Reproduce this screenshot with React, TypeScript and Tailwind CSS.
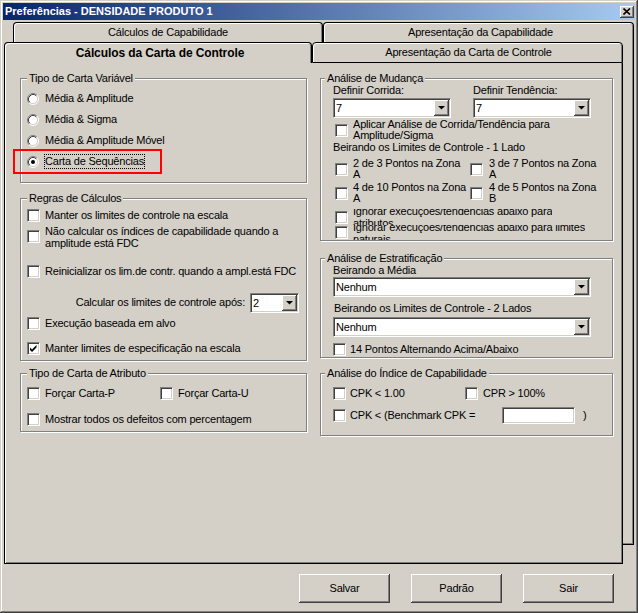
import React from 'react';

// classic win32 bevels
const sunken =
  'border border-t-[#808080] border-l-[#808080] border-b-white border-r-white shadow-[inset_1px_1px_0_#404040,inset_-1px_-1px_0_#d4d0c8]';
const raised =
  'shadow-[inset_-1px_-1px_0_#404040,inset_1px_1px_0_#ffffff,inset_-2px_-2px_0_#808080,inset_2px_2px_0_#d4d0c8]';

const Check = ({ checked }: { checked?: boolean }) => (
  <span className={`relative block h-[13px] w-[13px] shrink-0 bg-white ${sunken}`}>
    {checked && (
      <svg className="absolute left-0 top-0" width="11" height="11" viewBox="0 0 11 11">
        <path d="M2 4.5 L4 6.5 L8.5 2 V4.5 L4 9 L2 7 Z" fill="#000" />
      </svg>
    )}
  </span>
);

const Radio = ({ checked }: { checked?: boolean }) => (
  <svg className="shrink-0" width="12" height="12" viewBox="0 0 12 12">
    <circle cx="6" cy="6" r="4.5" fill="#fff" />
    <path d="M2.11 9.89 A5.5 5.5 0 0 1 9.89 2.11" fill="none" stroke="#808080" />
    <path d="M9.89 2.11 A5.5 5.5 0 0 1 2.11 9.89" fill="none" stroke="#fff" />
    <path d="M2.82 9.18 A4.5 4.5 0 0 1 9.18 2.82" fill="none" stroke="#404040" />
    <path d="M9.18 2.82 A4.5 4.5 0 0 1 2.82 9.18" fill="none" stroke="#d4d0c8" />
    {checked && <circle cx="6" cy="6" r="2" fill="#000" />}
  </svg>
);

const Combo = ({ value, className }: { value: string; className: string }) => (
  <div className={`flex h-[20px] shrink-0 bg-white p-[1px] ${sunken} ${className}`}>
    <span className="flex-1 pl-[1px] leading-[16px]">{value}</span>
    <span className={`flex h-full w-[15px] items-center justify-center bg-[#d4d0c8] ${raised}`}>
      <svg width="7" height="4" viewBox="0 0 7 4">
        <path d="M0 0 H7 L3.5 3.5 Z" fill="#000" />
      </svg>
    </span>
  </div>
);

const Group = ({
  title,
  legendClass,
  className,
  innerClass,
  children,
}: {
  title: string;
  legendClass: string;
  className?: string;
  innerClass: string;
  children: React.ReactNode;
}) => (
  <fieldset className={`border border-[#808080] shadow-[inset_1px_1px_0_#ffffff,1px_1px_0_#ffffff] ${className ?? ''}`}>
    <legend className={`bg-[#d4d0c8] px-[2px] leading-[13px] ${legendClass}`}>{title}</legend>
    <div className={innerClass}>{children}</div>
  </fieldset>
);

const Button = ({ label }: { label: string }) => (
  <div className={`flex h-[29px] w-[91px] items-center justify-center bg-[#d4d0c8] ${raised}`}>{label}</div>
);

export default function App() {
  return (
    <div className="h-[613px] w-[638px] bg-[#d4d0c8] px-[3px] pt-[3px] font-['Liberation_Sans',Arial,sans-serif] text-[11px] leading-[13px] tracking-[-0.2px] text-black shadow-[inset_-1px_-1px_0_#404040,inset_1px_1px_0_#d4d0c8,inset_-2px_-2px_0_#808080,inset_2px_2px_0_#ffffff]">
      {/* title bar */}
      <div className="flex h-[17px] items-center justify-between bg-[linear-gradient(to_right,#0a246a,#a6caf0)] pl-[2px] pr-[1px]">
        <span className="font-bold tracking-normal text-white">Preferências - DENSIDADE PRODUTO 1</span>
        <div className={`flex h-[12px] w-[14px] items-center justify-center bg-[#d4d0c8] ${raised}`}>
          <svg width="8" height="7" viewBox="0 0 8 7">
            <path d="M0.5 0.5 L7 6.5 M7 0.5 L0.5 6.5" stroke="#000" strokeWidth="1.6" />
          </svg>
        </div>
      </div>

      {/* tab control */}
      <div className="relative ml-[1px] mt-[2px]">
        <div className="absolute left-[9px] top-[20px] h-[503px] w-[621px] border-b border-r border-black bg-[#d4d0c8] shadow-[inset_-1px_-1px_0_#808080]" />

        <div className="relative flex pl-[9px]">
          <div className="flex h-[20px] w-[310px] items-center justify-center rounded-t-[4px] border-x border-t border-black shadow-[inset_1px_1px_0_#ffffff,inset_-1px_0_0_#808080]">
            Cálculos de Capabilidade
          </div>
          <div className="flex h-[20px] w-[311px] items-center justify-center rounded-t-[4px] border-x border-t border-black pl-[4px] shadow-[inset_1px_1px_0_#ffffff,inset_-1px_0_0_#808080]">
            Apresentação da Capabilidade
          </div>
        </div>

        <div className="relative flex">
          <div className="flex h-[21px] w-[308px] items-center justify-center rounded-t-[4px] border-x border-t border-black pl-[4px] text-[12px] font-bold tracking-[-0.1px] shadow-[inset_1px_1px_0_#ffffff,inset_-1px_0_0_#808080]">
            Cálculos da Carta de Controle
          </div>
          <div className="flex h-[21px] w-[311px] items-center justify-center rounded-t-[4px] border border-black pl-[2px] shadow-[inset_1px_1px_0_#ffffff,inset_-1px_0_0_#808080]">
            Apresentação da Carta de Controle
          </div>
        </div>

        <div className="relative z-10 flex h-[501px] w-[619px] gap-[13px] border-x border-b border-black bg-[#d4d0c8] pl-[15px] pt-[9px] shadow-[inset_1px_0_0_#ffffff,inset_-1px_-1px_0_#808080]">
          {/* left column */}
          <div className="flex w-[287px] flex-col">
            <Group title="Tipo de Carta Variável" legendClass="ml-[6px]" innerClass="flex flex-col pb-[10px] pl-[6px] pt-[3px]">
              <div className="flex h-[21px] items-center gap-[6px]">
                <Radio />
                <span>Média &amp; Amplitude</span>
              </div>
              <div className="flex h-[21px] items-center gap-[6px]">
                <Radio />
                <span>Média &amp; Sigma</span>
              </div>
              <div className="flex h-[21px] items-center gap-[6px]">
                <Radio />
                <span>Média &amp; Amplitude Móvel</span>
              </div>
              <div className="relative flex h-[21px] items-center gap-[5px]">
                <Radio checked />
                <span className="border border-dotted border-black">Carta de Sequências</span>
                <div className="pointer-events-none absolute -left-[14px] -top-[2px] h-[25px] w-[149px] border-2 border-[#ff0000]" />
              </div>
            </Group>

            <Group title="Regras de Cálculos" className="mt-[9px]" legendClass="ml-[6px]" innerClass="flex flex-col pb-[1px] pl-[6px]">
              <div className="flex h-[21px] items-center gap-[5px]">
                <Check />
                <span>Manter os limites de controle na escala</span>
              </div>
              <div className="flex h-[21px] items-center gap-[5px]">
                <Check />
                <span className="leading-[12px]">
                  Não calcular os índices de capabilidade quando a<br />
                  amplitude está FDC
                </span>
              </div>
              <div className="mt-[14px] flex h-[21px] items-center gap-[5px]">
                <Check />
                <span className="whitespace-nowrap">Reinicializar os lim.de contr. quando a ampl.está FDC</span>
              </div>
              <div className="mt-[10px] flex h-[21px] items-center justify-end gap-[5px] pr-[7px]">
                <span>Calcular os limites de controle após:</span>
                <Combo value="2" className="w-[49px]" />
              </div>
              <div className="flex h-[21px] items-center gap-[5px]">
                <Check />
                <span>Execução baseada em alvo</span>
              </div>
              <div className="mt-[4px] flex h-[21px] items-center gap-[5px]">
                <Check checked />
                <span>Manter limites de especificação na escala</span>
              </div>
            </Group>

            <Group title="Tipo de Carta de Atributo" className="mt-[6px]" legendClass="ml-[6px]" innerClass="flex flex-col pb-[1px] pl-[6px] pt-[3px]">
              <div className="flex h-[21px] items-center">
                <div className="flex w-[133px] items-center gap-[5px]">
                  <Check />
                  <span>Forçar Carta-P</span>
                </div>
                <div className="flex items-center gap-[5px]">
                  <Check />
                  <span>Forçar Carta-U</span>
                </div>
              </div>
              <div className="mt-[5px] flex h-[21px] items-center gap-[5px]">
                <Check />
                <span>Mostrar todos os defeitos com percentagem</span>
              </div>
            </Group>
          </div>

          {/* right column */}
          <div className="flex w-[293px] flex-col">
            <Group title="Análise de Mudança" legendClass="ml-[4px]" innerClass="flex flex-col pl-[12px]">
              <div className="-mt-[1px] flex h-[12px] leading-[12px]">
                <span className="w-[140px]">Definir Corrida:</span>
                <span>Definir Tendência:</span>
              </div>
              <div className="mt-[2px] flex gap-[22px]">
                <Combo value="7" className="w-[118px]" />
                <Combo value="7" className="w-[118px]" />
              </div>
              <div className="ml-[2px] mt-[1px] flex items-center gap-[5px] leading-[11px]">
                <Check />
                <span>
                  Aplicar Análise de Corrida/Tendência para<br />
                  Amplitude/Sigma
                </span>
              </div>
              <div className="h-[12px] leading-[12px]">Beirando os Limites de Controle - 1 Lado</div>
              <div className="ml-[2px] mt-[5px] flex leading-[11px]">
                <div className="flex w-[135px] items-center gap-[5px]">
                  <Check />
                  <span className="whitespace-nowrap">
                    2 de 3 Pontos na Zona<br />A
                  </span>
                </div>
                <div className="flex items-center gap-[6px]">
                  <Check />
                  <span className="whitespace-nowrap">
                    3 de 7 Pontos na Zona<br />A
                  </span>
                </div>
              </div>
              <div className="ml-[2px] mt-[2px] flex leading-[11px]">
                <div className="flex w-[135px] items-center gap-[5px]">
                  <Check />
                  <span className="whitespace-nowrap">
                    4 de 10 Pontos na Zona<br />A
                  </span>
                </div>
                <div className="flex items-center gap-[6px]">
                  <Check />
                  <span className="whitespace-nowrap">
                    4 de 5 Pontos na Zona<br />B
                  </span>
                </div>
              </div>
              <div className="ml-[2px] mt-[5px] flex h-[16px] items-center gap-[5px]">
                <Check />
                <div className="h-[16px] overflow-hidden">
                  <div className="-mt-[4px] whitespace-nowrap leading-[12px]">
                    Ignorar execuções/tendências abaixo para<br />
                    atributos
                  </div>
                </div>
              </div>
              <div className="ml-[2px] flex h-[15px] items-center gap-[5px]">
                <Check />
                <div className="h-[15px] overflow-hidden">
                  <div className="-mt-[4px] whitespace-nowrap leading-[12px]">
                    Ignorar execuções/tendências abaixo para limites<br />
                    naturais
                  </div>
                </div>
              </div>
            </Group>

            <Group title="Análise de Estratificação" className="mt-[11px]" legendClass="ml-[4px]" innerClass="flex flex-col pb-[1px] pl-[12px]">
              <div className="-mt-[1px] h-[12px] leading-[12px]">Beirando a Média</div>
              <Combo value="Nenhum" className="mt-[1px] w-[258px]" />
              <div className="mt-[5px] h-[12px] pl-[1px] leading-[12px]">Beirando os Limites de Controle - 2 Lados</div>
              <Combo value="Nenhum" className="mt-[3px] w-[258px]" />
              <div className="mt-[6px] flex h-[13px] items-center gap-[4px]">
                <Check />
                <span>14 Pontos Alternando Acima/Abaixo</span>
              </div>
            </Group>

            <Group title="Análise do Índice de Capabilidade" className="mt-[9px]" legendClass="ml-[4px]" innerClass="flex flex-col pb-[11px] pl-[12px]">
              <div className="mt-[7px] flex h-[13px] items-center">
                <div className="flex w-[132px] items-center gap-[4px]">
                  <Check />
                  <span>CPK &lt; 1.00</span>
                </div>
                <div className="flex items-center gap-[5px]">
                  <Check />
                  <span>CPR &gt; 100%</span>
                </div>
              </div>
              <div className="mt-[7px] flex h-[17px] items-center">
                <div className="flex w-[169px] items-center gap-[4px]">
                  <Check />
                  <span>CPK &lt; (Benchmark CPK =</span>
                </div>
                <div className={`h-[17px] w-[73px] bg-white ${sunken}`} />
                <span className="ml-[8px]">)</span>
              </div>
            </Group>
          </div>
        </div>
      </div>

      {/* buttons */}
      <div className="mt-[10px] flex justify-end gap-[21px] pr-[21px]">
        <Button label="Salvar" />
        <Button label="Padrão" />
        <Button label="Sair" />
      </div>
    </div>
  );
}
